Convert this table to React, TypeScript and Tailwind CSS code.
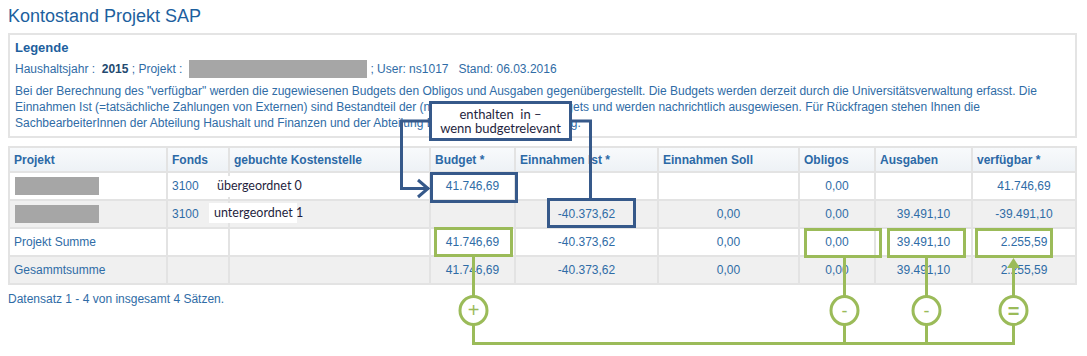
import React from "react";

const GRID =
  "grid grid-cols-[158px_62px_201px_85px_143px_141px_76px_97px_104px]";
const CELL = "flex items-center border-r-2 border-b-2 border-[#e3e3e3] px-[4px]";
const NUM = "justify-center";

type Row = { bg: string; cells: (string | null)[]; label?: string; gray?: boolean };

const rows: Row[] = [
  { bg: "bg-white", gray: true, cells: ["3100", "", "41.746,69", "", "", "0,00", "", "41.746,69"] },
  { bg: "bg-[#f0f0f0]", gray: true, cells: ["3100", "", "", "-40.373,62", "0,00", "0,00", "39.491,10", "-39.491,10"] },
  { bg: "bg-white", label: "Projekt Summe", cells: ["", "", "41.746,69", "-40.373,62", "0,00", "0,00", "39.491,10", "2.255,59"] },
  { bg: "bg-[#f0f0f0]", label: "Gesammtsumme", cells: ["", "", "41.746,69", "-40.373,62", "0,00", "0,00", "39.491,10", "2.255,59"] },
];

const headers = [
  "Projekt",
  "Fonds",
  "gebuchte Kostenstelle",
  "Budget *",
  "Einnahmen Ist *",
  "Einnahmen Soll",
  "Obligos",
  "Ausgaben",
  "verfügbar *",
];

const BLUE = "#36598a";
const GREEN = "#9bbb59";

function Overlay() {
  return (
    <svg
      className="absolute left-0 top-0 pointer-events-none"
      width={1087}
      height={356}
      viewBox="0 0 1087 356"
    >
      <g fill="none" stroke={BLUE} strokeWidth={3}>
        <polyline points="430,121 401.5,121 401.5,188.5 429,188.5" />
        <polyline points="418,180 428,188.5 418,197" />
        <polyline points="572,121 590.5,121 590.5,199" />
        <rect x={431.5} y={173.5} width={85} height={28} />
        <rect x={548.5} y={199.5} width={86} height={27} />
      </g>
      <g fill="none" stroke={GREEN} strokeWidth={3}>
        <rect x={435.5} y={228.5} width={76} height={27} />
        <rect x={805.5} y={229.5} width={75} height={27} />
        <rect x={888.5} y={229.5} width={76} height={27} />
        <rect x={976.5} y={229.5} width={75} height={27} />
        <line x1={473.5} y1={257} x2={473.5} y2={297} />
        <line x1={844.5} y1={258} x2={844.5} y2={297} />
        <line x1={926.5} y1={258} x2={926.5} y2={297} />
        <line x1={1013.5} y1={266} x2={1013.5} y2={297} />
        <ellipse cx={473.5} cy={310.5} rx={13.5} ry={14} />
        <ellipse cx={844.5} cy={310.5} rx={13.5} ry={14} />
        <ellipse cx={926.5} cy={310.5} rx={13.5} ry={14} />
        <ellipse cx={1013.5} cy={310.5} rx={13.5} ry={14} />
        <polyline points="473.5,324 473.5,343.5 1013.5,343.5 1013.5,324" />
        <line x1={844.5} y1={324} x2={844.5} y2={343} />
        <line x1={926.5} y1={324} x2={926.5} y2={343} />
      </g>
      <polygon points="1013.5,258 1007,268 1020,268" fill={GREEN} />
      <g fill={GREEN} fontFamily="'Liberation Sans', Arial, sans-serif" textAnchor="middle">
        <text x={473.5} y={317} fontSize={20} fontWeight={300}>+</text>
        <text x={844.5} y={317} fontSize={18}>-</text>
        <text x={926.5} y={317} fontSize={18}>-</text>
        <text x={1013.5} y={318} fontSize={20} fontWeight={700}>=</text>
      </g>
    </svg>
  );
}

export default function App() {
  return (
    <div className="relative w-[1087px] h-[356px] overflow-hidden bg-white font-['Liberation_Sans',Arial,sans-serif] text-[12px] text-[#2f6ca6]">
      <div className="pl-2 pt-[5px]">
        <h1 className="text-[18px] leading-[22px] text-[#1d5f9e]">Kontostand Projekt SAP</h1>
        <div className="mt-[6px] h-[105px] w-[1069px] border-2 border-[#e4e4e4] px-[5px] pt-[5px]">
          <div className="text-[13px] font-bold leading-[16px] text-[#1d5f9e]">Legende</div>
          <div className="mt-1 flex items-center whitespace-pre leading-[16px]">
            <span>Haushaltsjahr :  </span>
            <b className="text-[#23496f]">2015</b>
            <span> ; Projekt :  </span>
            <span className="inline-block h-[18px] w-[178px] bg-[#a6a6a6]" />
            <span> ; User: ns1017   Stand: 06.03.2016</span>
          </div>
          <p className="mt-[5px] whitespace-nowrap leading-[16px]">
            Bei der Berechnung des "verfügbar" werden die zugewiesenen Budgets den Obligos und Ausgaben gegenübergestellt. Die Budgets werden derzeit durch die Universitätsverwaltung erfasst. Die
            <br />
            Einnahmen Ist (=tatsächliche Zahlungen von Externen) sind Bestandteil der (noch nicht relevanten) Budgets und werden nachrichtlich ausgewiesen. Für Rückfragen stehen Ihnen die
            <br />
            SachbearbeiterInnen der Abteilung Haushalt und Finanzen und der Abteilung Buchhaltung und Controlling.
          </p>
        </div>

        <div className="mt-[8px] w-[1069px] border-l-2 border-t-2 border-[#e3e3e3]">
          <div className={`${GRID} h-[25px] bg-linear-to-b from-[#f8fafc] to-[#edf1f5] font-bold text-[#2c69a6]`}>
            {headers.map((h) => (
              <div key={h} className={CELL}>
                {h}
              </div>
            ))}
          </div>
          {rows.map((r, i) => (
            <div key={i} className={`${GRID} h-[28px] ${r.bg}`}>
              <div className={CELL}>
                {r.gray ? (
                  <span className="ml-px inline-block h-[18px] w-[84px] bg-[#a6a6a6]" />
                ) : (
                  <span>{r.label}</span>
                )}
              </div>
              {r.cells.map((c, j) => (
                <div key={j} className={`${CELL} ${j >= 2 ? NUM : ""}`}>
                  {c}
                </div>
              ))}
            </div>
          ))}
        </div>

        <div className="mt-[6px] leading-[16px]">Datensatz 1 - 4 von insgesamt 4 Sätzen.</div>
      </div>

      <div className="absolute left-[212px] top-[176px] flex h-[21px] w-[92px] items-center whitespace-nowrap bg-white pl-[5px] font-['Lato',sans-serif] text-[12.5px] text-[#1f1f40]">
        übergeordnet 0
      </div>
      <div className="absolute left-[209px] top-[203px] flex h-[20px] w-[88px] items-center whitespace-nowrap bg-white pl-[5px] font-['Lato',sans-serif] text-[12.5px] text-[#1f1f40]">
        untergeordnet 1
      </div>

      <Overlay />

      <div className="absolute left-[429px] top-[101px] flex h-[40px] w-[143px] flex-col items-center justify-center border-[3px] border-[#36598a] bg-white font-['Lato',sans-serif] text-[13px] leading-[14px] text-[#1f1f40]">
        <span className="whitespace-pre">enthalten  in –</span>
        <span className="whitespace-nowrap">wenn budgetrelevant</span>
      </div>
    </div>
  );
}
